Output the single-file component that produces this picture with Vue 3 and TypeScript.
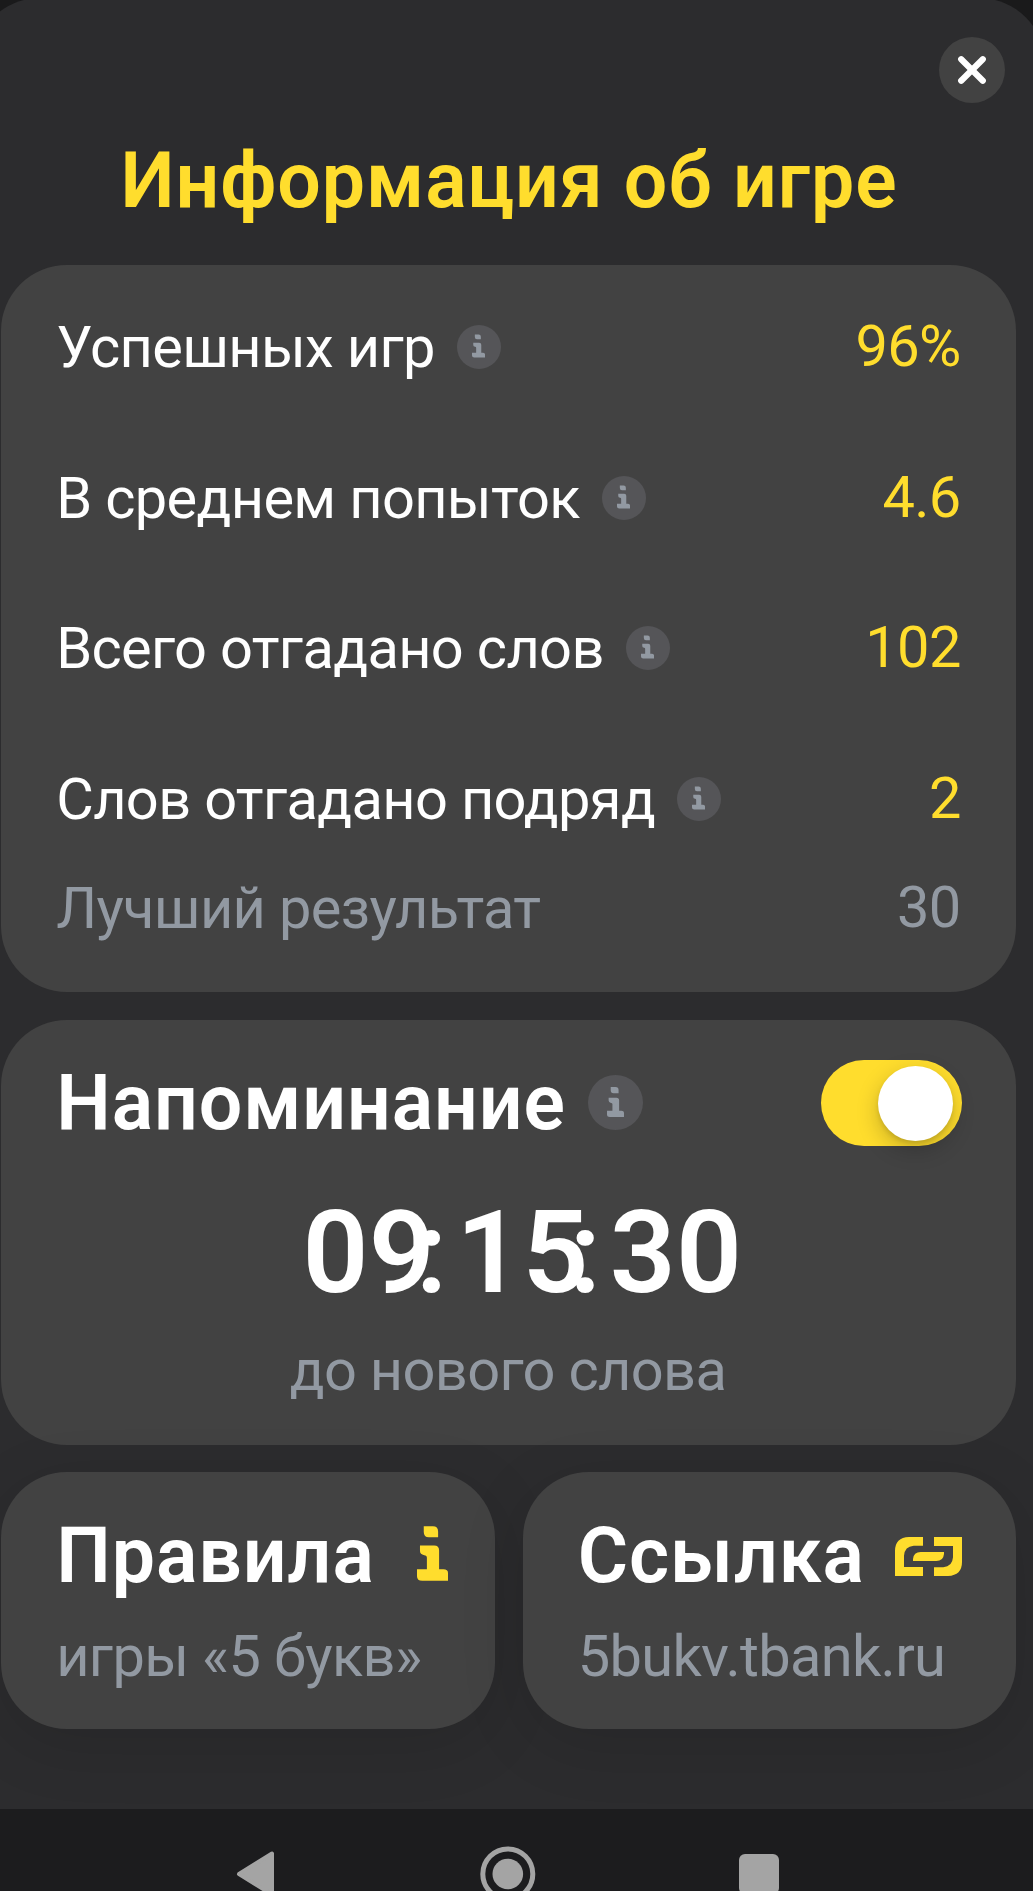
<script setup lang="ts">
import { ref } from 'vue'

interface Stat {
  label: string
  value: string
}

const stats: Stat[] = [
  { label: 'Успешных игр', value: '96%' },
  { label: 'В среднем попыток', value: '4.6' },
  { label: 'Всего отгадано слов', value: '102' },
  { label: 'Слов отгадано подряд', value: '2' },
]
const timer: string[] = ['09', '15', '30']
const reminder = ref(true)

const infoPath =
  'M20.5 0H48Q64 0 64 16V34H36Q20.5 34 20.5 18ZM9 59H52Q67 59 67 74V131H80Q94 131 94 142V166H16Q0 166 0 152V131H30V96Q30 88 22 88Q9 86 9 75Z'
</script>

<template>
  <div class="screen">
    <main class="sheet">
      <header class="top">
        <button class="close" aria-label="Закрыть">
          <svg viewBox="0 0 66 66"><path d="M22.2 22.2 43.8 43.8M43.8 22.2 22.2 43.8" /></svg>
        </button>
      </header>
      <h1 class="title">Информация об игре</h1>

      <div class="cards">
        <section class="card stats">
          <div v-for="s in stats" :key="s.label" class="row">
            <span class="label">{{ s.label }}</span>
            <span class="badge"><svg viewBox="0 0 94 166"><path :d="infoPath" /></svg></span>
            <span class="value">{{ s.value }}</span>
          </div>
          <div class="row best">
            <span class="label">Лучший результат</span>
            <span class="value">30</span>
          </div>
        </section>

        <section class="card reminder">
          <div class="head">
            <h2>Напоминание</h2>
            <span class="badge large"><svg viewBox="0 0 94 166"><path :d="infoPath" /></svg></span>
            <button
              class="toggle"
              :class="{ on: reminder }"
              role="switch"
              :aria-checked="reminder"
              @click="reminder = !reminder"
            >
              <span class="knob"></span>
            </button>
          </div>
          <div class="timer">
            <span v-for="(t, i) in timer" :key="i" class="unit">{{ t }}<span v-if="i < 2" class="colon">:</span></span>
          </div>
          <p class="sub until">до нового слова</p>
        </section>

        <div class="pair">
          <section class="card tile">
            <div class="head">
              <h2>Правила</h2>
              <svg class="ico-info" viewBox="0 0 94 166"><path :d="infoPath" /></svg>
            </div>
            <p class="sub">игры «5 букв»</p>
          </section>
          <section class="card tile">
            <div class="head">
              <h2>Ссылка</h2>
              <svg class="ico-link" viewBox="0 0 201 117">
                <path d="M84 0H42Q0 2 0 42V117H84V90H27V56Q29 28 56 26H84Z" />
                <path d="M117 117H159Q201 115 201 75V0H117V27H174V61Q172 89 145 91H117Z" />
                <path d="M54 72V66Q56 45 77 45H147V51Q145 72 124 72Z" />
              </svg>
            </div>
            <p class="sub">5bukv.tbank.ru</p>
          </section>
        </div>
      </div>
    </main>

    <nav class="nav">
      <svg width="1033" height="82" viewBox="0 0 1033 82">
        <path d="M239 65 272 44.5V85.5Z" stroke="#a4a4a4" stroke-width="4" stroke-linejoin="round" />
        <circle cx="507.8" cy="65" r="25" fill="none" stroke="#a4a4a4" stroke-width="5" />
        <circle cx="507.8" cy="65" r="15.3" />
        <rect x="739" y="45" width="40" height="40" rx="6" />
      </svg>
    </nav>
  </div>
</template>

<style>
body {
  margin: 0;
  background: #1a1a1b;
}
</style>

<style scoped>
.screen {
  width: 1033px;
  height: 1891px;
  overflow: hidden;
  display: flex;
  flex-direction: column;
  background: #1a1a1b;
  font-family: Roboto, 'Liberation Sans', sans-serif;
  font-size: 57.75px;
  line-height: 66px;
  letter-spacing: -0.65px;
  color: #fff;
}
h1,
h2,
p {
  margin: 0;
}
button {
  border: 0;
  padding: 0;
}
.sheet {
  box-sizing: border-box;
  flex: none;
  height: 1811px;
  margin: -2px -12px 0 -26px;
  padding: 2px 12px 0 26px;
  border-radius: 66px 66px 0 0;
  background: #2c2c2e;
}
.top {
  display: flex;
  justify-content: flex-end;
  padding: 37px 28px 0 0;
}
.close {
  width: 66px;
  height: 66px;
  border-radius: 50%;
  background: #424242;
}
.close svg {
  display: block;
  fill: none;
  stroke: #fff;
  stroke-width: 6.2;
  stroke-linecap: round;
}
.title {
  margin-top: 33.5px;
  width: 1018px;
  text-align: center;
  font-size: 77px;
  line-height: 88px;
  font-weight: 650;
  letter-spacing: 0.95px;
  color: #ffdd2d;
}
.cards {
  display: flex;
  flex-direction: column;
  gap: 28px;
  width: 1015px;
  margin: 40px 0 0 1.2px;
}
.card {
  box-sizing: border-box;
  border-radius: 66px;
  background: #424242;
  padding: 0 54.5px 0 55px;
}
.stats {
  height: 727px;
  padding-top: 49.4px;
}
.row {
  display: flex;
  align-items: center;
  height: 66px;
  margin-bottom: 84.8px;
}
.row:nth-last-child(2) {
  margin-bottom: 42.5px;
}
.badge {
  display: flex;
  align-items: center;
  justify-content: center;
  width: 44px;
  height: 44px;
  margin-left: 21.8px;
  border-radius: 50%;
  background: #555558;
}
.badge svg {
  width: 13px;
  height: 24px;
  margin-top: -2px;
  fill: #9299a2;
}
.badge.large {
  width: 55px;
  height: 55px;
}
.badge.large svg {
  width: 17px;
  height: 30px;
}
.value {
  margin-left: auto;
  margin-right: 1px;
  color: #ffdd2d;
  position: relative;
  top: -1px;
}
.best,
.best .value,
.sub {
  color: #9299a2;
}
.head {
  display: flex;
  align-items: center;
}
h2 {
  font-size: 77px;
  line-height: 88px;
  font-weight: 650;
  letter-spacing: 0.95px;
}
.reminder {
  height: 425px;
  padding-top: 39.2px;
}
.toggle {
  box-sizing: border-box;
  width: 141px;
  height: 85.5px;
  margin: 1px 0 0 auto;
  padding: 5px 9px;
  border-radius: 43px;
  background: #77777a;
  display: flex;
  align-items: center;
}
.toggle.on {
  background: #ffdd2d;
  justify-content: flex-end;
}
.knob {
  width: 75px;
  height: 75px;
  border-radius: 50%;
  background: #fff;
  box-shadow: 0 8px 22px rgba(0, 0, 0, 0.22), 0 3px 4px rgba(0, 0, 0, 0.1);
}
.timer {
  display: flex;
  justify-content: center;
  gap: 21px;
  margin-top: 40.5px;
  padding-left: 27px;
  font-size: 115.5px;
  line-height: 132px;
  font-weight: 640;
  letter-spacing: 0.3px;
}
.unit {
  position: relative;
}
.colon {
  position: absolute;
  right: -12.5px;
  top: 0;
}
.until {
  margin: 18px 2px 0 0;
  text-align: center;
}
.pair {
  display: grid;
  grid-template-columns: 1fr 1fr;
  gap: 28px;
  margin-top: -1px;
}
.tile {
  height: 257px;
  padding-top: 40px;
  box-shadow: 0 16px 66px rgba(0, 0, 0, 0.12);
}
.tile h2 {
  flex: 1;
}
.tile .sub {
  margin-top: 23.2px;
  white-space: nowrap;
}
.ico-info {
  flex: none;
  width: 31px;
  height: 55px;
  margin: -5px -8px 0 0;
  fill: #ffdd2d;
}
.ico-link {
  flex: none;
  width: 67px;
  height: 39px;
  margin-top: 2px;
  fill: #ffdd2d;
}
.nav {
  flex: none;
  height: 82px;
  background: #1c1c1e;
}
.nav svg {
  display: block;
  fill: #a4a4a4;
}
</style>
